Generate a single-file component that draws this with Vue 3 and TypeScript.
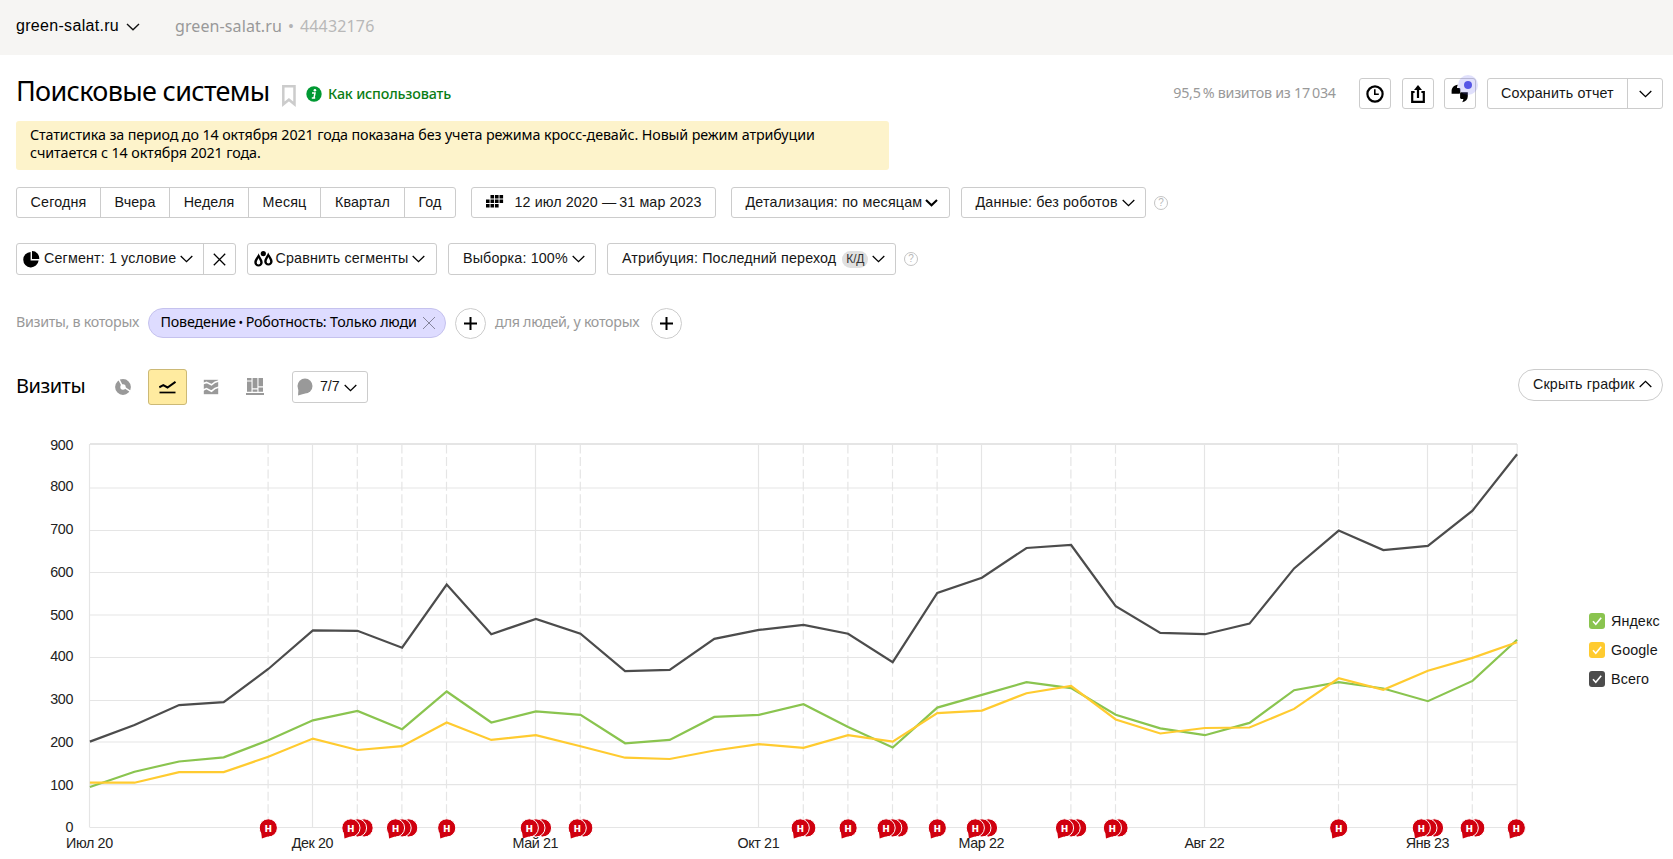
<script setup lang="ts">
interface Series {
  name: string
  color: string
  values: number[]
}

const X0 = 89.9
const X_STEP = 44.6
const Y0 = 827.3
const Y_UNIT = 0.42447

const periods = [
  { label: 'Сегодня', cls: 'p1' },
  { label: 'Вчера', cls: 'p2' },
  { label: 'Неделя', cls: 'p3' },
  { label: 'Месяц', cls: 'p4' },
  { label: 'Квартал', cls: 'p5' },
  { label: 'Год', cls: 'p6' },
]

const series: Series[] = [
  {
    name: 'Яндекс',
    color: '#8ac44f',
    values: [95, 131, 155, 165, 205, 252, 274, 231, 320, 247, 273, 265, 198, 206, 260, 265, 290, 236, 188, 282, 312, 342, 328, 265, 233, 217, 246, 323, 342, 327, 297, 345, 442],
  },
  {
    name: 'Google',
    color: '#ffcb30',
    values: [105, 105, 130, 130, 166, 209, 182, 191, 247, 206, 217, 191, 164, 161, 181, 196, 187, 217, 202, 269, 275, 316, 333, 254, 221, 234, 235, 279, 351, 324, 369, 399, 436],
  },
  {
    name: 'Всего',
    color: '#4c4c4c',
    values: [202, 241, 288, 295, 373, 464, 463, 423, 572, 455, 491, 456, 368, 371, 444, 465, 477, 456, 389, 552, 588, 658, 665, 521, 458, 455, 480, 610, 699, 653, 663, 746, 879],
  },
]

const px = (i: number): number => X0 + i * X_STEP
const points = (s: Series): string =>
  s.values.map((v, i) => `${px(i).toFixed(1)},${(Y0 - v * Y_UNIT).toFixed(1)}`).join(' ')

const yTicks = [
  { v: 900, line: 444, base: 450 },
  { v: 800, line: 488, base: 491 },
  { v: 700, line: 530.5, base: 534 },
  { v: 600, line: 572.5, base: 577 },
  { v: 500, line: 615, base: 620 },
  { v: 400, line: 657.5, base: 661 },
  { v: 300, line: 700.5, base: 703.5 },
  { v: 200, line: 742, base: 746.5 },
  { v: 100, line: 784.7, base: 789.5 },
  { v: 0, line: 827.5, base: 832 },
]

const xTicks = [
  { i: 0, label: 'Июл 20' },
  { i: 5, label: 'Дек 20' },
  { i: 10, label: 'Май 21' },
  { i: 15, label: 'Окт 21' },
  { i: 20, label: 'Мар 22' },
  { i: 25, label: 'Авг 22' },
  { i: 30, label: 'Янв 23' },
]

const dashed = [4, 6, 7, 8, 11, 16, 17, 18, 19, 22, 23, 28, 31]

// [month index, number of bubbles stacked behind the front one]
const notes = [
  [4, 0], [6, 2], [7, 2], [8, 0], [10, 2], [11, 1], [16, 1], [17, 0], [18, 2],
  [19, 0], [20, 2], [22, 2], [23, 1], [28, 0], [30, 2], [31, 1], [32, 0],
].map(([i, size]) => {
  const spread = size * 6.6
  const front = px(i) - spread / 2 - (i === 32 ? 0.8 : 0)
  const behind = Array.from({ length: size }, (_, k) => front + 6.6 * (size - k))
  return { i, front, behind }
})
</script>

<template>
  <div class="page">
    <header class="topbar">
      <span class="site">green-salat.ru</span>
      <svg class="site-chev" width="14" height="8" viewBox="0 0 14 8"><path d="M1 1l6 5.7L13 1" /></svg>
      <span class="counter">green-salat.ru</span>
      <span class="dot">•</span>
      <span class="counter-id">44432176</span>
    </header>

    <main>
      <div class="title-row">
        <h1>Поисковые системы</h1>
        <svg class="bookmark" width="14" height="22" viewBox="0 0 14 22"><path d="M1.3 1.3h11.2v18l-5.6-4.6-5.6 4.6z" /></svg>
        <svg class="info" width="16" height="16" viewBox="0 0 16 16">
          <circle cx="8" cy="8" r="7.7" fill="#009933" />
          <circle cx="8.9" cy="4.2" r="1.3" fill="#fff" />
          <path d="M6 7h3l-1 4.9h1.2M5.8 12.1h3.2" fill="none" stroke="#fff" stroke-width="1.5" />
        </svg>
        <a class="howto">Как использовать</a>
        <span class="share-info">95,5&#8201;% визитов из 17&#8201;034</span>
        <button class="btn sq">
          <svg width="18" height="18" viewBox="0 0 18 18"><circle cx="9" cy="9" r="7.6" /><path d="M8.8 4.2v5.1h4" class="thin" /></svg>
        </button>
        <button class="btn sq">
          <svg width="14" height="18" viewBox="0 0 14 18"><path d="M3.6 7H1.2v9.8h11.6V7h-2.4" /><path d="M7 13V3" /><path d="M7 0l4 5H3z" class="solid" /></svg>
        </button>
        <button class="btn sq quotes">
          <svg width="18" height="19" viewBox="0 0 18 19">
            <path class="solid" d="M6.800.8C3 1.400.600 3.800.600 6.800V9.800h7.800l.9-.9V4.800L8.400 3.900H6c0-1.200.4-2.200.8-3.100z" />
            <path class="solid" d="M10 8.200h6.800v4c0 3.200-2.200 5.200-5.600 6 .8-1.200 1.100-2.100 1.100-3.200H10l-.9-.9V9.100z" />
          </svg>
          <i class="badge-dot"></i>
        </button>
        <div class="btn split save"><span>Сохранить отчет</span><b><svg class="chev" width="13" height="8" viewBox="0 0 13 8"><path d="M.7 1l5.800 5.600L12.300 1" /></svg></b></div>
      </div>

      <p class="notice">Статистика за период до 14 октября 2021 года показана без учета режима кросс-девайс. Новый режим атрибуции<br />считается с 14 октября 2021 года.</p>

      <div class="row row1">
        <div class="group">
          <button v-for="p in periods" :key="p.label" :class="p.cls">{{ p.label }}</button>
        </div>
        <button class="btn date">
          <svg width="18" height="13" viewBox="0 0 18 13">
            <path class="solid" d="M4.500 0h3.600v3.600H4.500zM9 0h3.600v3.600H9zM13.500 0h3.600v3.600h-3.600zM0 4.500h3.600v3.600H0zM4.500 4.500h3.600v3.600H4.500zM9 4.500h3.600v3.600H9zM13.500 4.500h3.600v3.600h-3.600zM0 9h3.600v3.600H0zM4.500 9h3.600v3.600H4.500zM9 9h3.600v3.600H9z" />
          </svg>
          <span>12 июл 2020 —&#8201;31 мар 2023</span>
        </button>
        <button class="btn detail"><span>Детализация: по месяцам</span><svg class="chev bold" width="13" height="8" viewBox="0 0 13 8"><path d="M1 1l5.500 5.200L12 1" /></svg></button>
        <button class="btn data"><span>Данные: без роботов</span><svg class="chev" width="13" height="8" viewBox="0 0 13 8"><path d="M.7 1l5.800 5.600L12.300 1" /></svg></button>
        <i class="help">?</i>
      </div>

      <div class="row row2">
        <div class="btn split segment">
          <span>
            <svg width="17" height="17" viewBox="0 0 17 17"><path class="solid" d="M7.600 1A7.700 7.700 0 1 0 15.600 9.600H7.600z" /><path class="solid" d="M9 0a7.200 7.200 0 0 1 7.200 8H9z" /></svg>
            Сегмент: 1 условие
            <svg class="chev" width="13" height="8" viewBox="0 0 13 8"><path d="M.7 1l5.800 5.600L12.300 1" /></svg>
          </span>
          <b><svg class="chev" width="13" height="13" viewBox="0 0 13 13"><path d="M.8.800l11.400 11.400M12.200.800L.8 12.200" /></svg></b>
        </div>
        <button class="btn compare">
          <svg width="19" height="16" viewBox="0 0 19 16">
            <path class="solid" d="M4.600 2.200C4 5 .3 7.800.3 11.300a4.200 4.300 0 0 0 8.400 0C8.700 8.500 5.800 5.800 4.600 2.200zM14.200 1.400c-.9 3.200-4 5.800-4 8.900a4.200 4.300 0 0 0 8.400 0c0-3-3.300-5.700-4.400-8.900z" />
            <path fill="#fff" d="M4.500 7C3.900 9 2.700 9.800 2.700 11.600a1.800 2 0 0 0 3.600 0C6.300 9.800 5.100 9 4.500 7zM14.400 6c-.6 2-1.800 2.800-1.800 4.600a1.800 2 0 0 0 3.600 0C16.200 8.800 15 8 14.400 6z" />
            <circle class="solid" cx="9.300" cy="2.700" r="2.600" />
          </svg>
          <span>Сравнить сегменты</span><svg class="chev" width="13" height="8" viewBox="0 0 13 8"><path d="M.7 1l5.800 5.600L12.300 1" /></svg>
        </button>
        <button class="btn sample"><span>Выборка: 100%</span><svg class="chev" width="13" height="8" viewBox="0 0 13 8"><path d="M.7 1l5.800 5.600L12.300 1" /></svg></button>
        <button class="btn attr"><span>Атрибуция: Последний переход</span><em>К/Д</em><svg class="chev" width="13" height="8" viewBox="0 0 13 8"><path d="M.7 1l5.800 5.600L12.300 1" /></svg></button>
        <i class="help">?</i>
      </div>

      <div class="row row3">
        <span class="muted w1">Визиты, в которых</span>
        <div class="pill"><span>Поведение<small> • </small>Роботность: Только люди</span><svg width="14" height="14" viewBox="0 0 14 14"><path d="M1 1l12 12M13 1L1 13" /></svg></div>
        <button class="plus"><svg width="13" height="13" viewBox="0 0 13 13"><path d="M6.500 0v13M0 6.500h13" /></svg></button>
        <span class="muted w2">для людей, у которых</span>
        <button class="plus"><svg width="13" height="13" viewBox="0 0 13 13"><path d="M6.500 0v13M0 6.500h13" /></svg></button>
      </div>

      <div class="row row4">
        <h2>Визиты</h2>
        <svg class="mode donut" width="16" height="16" viewBox="0 0 16 16">
          <circle cx="8" cy="8" r="5.300" />
          <path d="M7.600 7.600L3.800.2M9 8.200l6.400 4.200" />
        </svg>
        <div class="active">
          <svg width="17" height="13" viewBox="0 0 17 13"><path d="M.3 6.300L4.300 4.200l4.200 2.300L16.500.9" stroke-width="2" /><path d="M.5 11.500h16" stroke-width="1.700" /></svg>
        </div>
        <svg class="mode area" width="16" height="16" viewBox="0 0 16 16">
          <rect width="16" height="16" fill="#999" />
          <path d="M-.5 4.800L3.500 3.400l5 2.400L12 3.200l4.500-1.400M-.5 11.300l4-1.700 5 2.600L12 9.400l4.500-1.600" />
        </svg>
        <svg class="mode bars" width="18" height="17" viewBox="0 0 18 17">
          <path fill="#999" d="M1 0h4.500v2.500H1zM1 3.600h4.500v10.200H1zM6.600 0h4.800v10.300H6.600zM6.600 11.400h4.800v2.400H6.600zM12.500 0H17v8.300h-4.500zM12.500 9.400H17v4.400h-4.500zM0 14.900h18V17H0z" />
        </svg>
        <button class="btn notes">
          <svg width="16" height="18" viewBox="0 0 16 18"><circle cx="8" cy="8" r="7.500" fill="#999" /><path d="M1.500 10.500L1 17.500l7-2z" fill="#999" /></svg>
          <span>7/7</span>
          <svg class="chev" width="13" height="8" viewBox="0 0 13 8"><path d="M.7 1l5.800 5.600L12.300 1" /></svg>
        </button>
        <button class="hide"><span>Скрыть график</span><svg class="chev" width="13" height="8" viewBox="0 0 13 8"><path d="M.7 7l5.800-5.600L12.300 7" /></svg></button>
      </div>
    </main>

    <section class="chart-area">
      <svg class="chart" width="1573" height="429" viewBox="0 430 1573 429">
        <g class="grid">
          <line v-for="t in yTicks" :key="t.v" :x1="90" :x2="1517" :y1="t.line" :y2="t.line" :class="{ top: t.v === 900 }" />
          <line v-for="t in xTicks" :key="t.i" :x1="px(t.i) - 0.4" :x2="px(t.i) - 0.4" y1="444" y2="827.500" />
          <line x1="1517.200" x2="1517.200" y1="444" y2="827.500" />
          <line v-for="i in dashed" :key="i" class="dash" :x1="px(i) - 0.2" :x2="px(i) - 0.2" y1="444.600" y2="827" />
        </g>
        <polyline v-for="s in series" :key="s.name" class="line" :points="points(s)" :stroke="s.color" />
        <g v-for="n in notes" :key="n.i" class="note">
          <circle v-for="b in n.behind" :key="b" :cx="b" cy="827.900" r="9.100" />
          <circle :cx="n.front" cy="827.900" r="9.100" />
          <path :d="`M${n.front - 7.200} 831.500l.8 7 7.200-2.600z`" />
          <text :x="n.front" y="831.700">н</text>
        </g>
        <g class="labels">
          <text v-for="t in yTicks" :key="t.v" x="73" :y="t.base" text-anchor="end">{{ t.v }}</text>
          <text v-for="t in xTicks" :key="t.i" :x="px(t.i) - 0.5" y="848.300" text-anchor="middle">{{ t.label }}</text>
        </g>
      </svg>
      <ul class="legend">
        <li v-for="s in series" :key="s.name">
          <svg width="16" height="16" viewBox="0 0 16 16"><rect width="16" height="16" rx="3" :fill="s.color" /><path d="M4 8.200l2.800 3L12.200 4.800" /></svg>
          {{ s.name }}
        </li>
      </ul>
    </section>
  </div>
</template>

<style>
body { background: #fff; overflow: hidden; }
</style>

<style scoped>
* { box-sizing: border-box; }
.page { width: 1673px; height: 859px; overflow: hidden; background: #fff; color: #000; font: 14.3px/18px 'Liberation Sans', Arial, sans-serif; letter-spacing: .14px; white-space: nowrap; }
button { font: inherit; letter-spacing: inherit; color: inherit; background: #fff; padding: 0; margin: 0; }
svg { flex: none; display: block; }
.topbar { height: 55px; background: #f6f5f3; display: flex; align-items: center; padding: 0 0 3px 16px; font-size: 16px; }
.site { width: 104px; letter-spacing: .31px; }
.site-chev { margin: 2px 0 0 6px; fill: none; stroke: #111; stroke-width: 1.4; }
.counter { margin-left: 35px; width: 107px; letter-spacing: .1px; color: #999; font-family: 'Noto Sans', sans-serif; }
.dot { width: 18px; text-align: center; color: #b3b3b3; font-size: 14px; }
.counter-id { letter-spacing: .16px; color: #b8b8b8; font-family: 'Noto Sans', sans-serif; }

main { padding: 0 10px 0 16px; }
.title-row { display: flex; align-items: center; height: 31px; margin-top: 23px; }
h1 { margin: 0; width: 265.500px; padding-bottom: 5px; font: 400 27px/34px 'Noto Sans', sans-serif; letter-spacing: -.68px; }
.bookmark { margin-top: 5px; fill: none; stroke: #ccc; stroke-width: 2.500; }
.info { margin: 1px 0 0 10.500px; }
.howto { margin: 1px 0 0 6px; font: 500 14.300px/18px 'Noto Sans', sans-serif; letter-spacing: -.18px; color: #0a7d14; }
.share-info { margin: -1px 22px 0 auto; width: 164px; color: #999; font-family: 'Noto Sans', sans-serif; letter-spacing: -.26px; }
.btn { display: flex; align-items: center; border: 1px solid #ccc; border-radius: 3px; background: #fff; height: 31px; }
.btn, .group, .hide, .legend { color: #161616; }
.solid { fill: #000; stroke: none; }
.sq { width: 32px; justify-content: center; margin-right: 10.600px; }
.sq svg { fill: none; stroke: #000; stroke-width: 2.200; }
.sq .thin { stroke-width: 1.600; }
.sq .solid { stroke: none; fill: #000; }
.quotes { position: relative; }
.quotes svg { margin: 0 0 0 -1px; }
.badge-dot { position: absolute; left: 13px; top: -4px; width: 20px; height: 20px; border-radius: 50%; background: #5757e6; background-clip: padding-box; border: 6px solid rgba(102, 98, 240, .2); }
.split { padding: 0; }
.split > span { display: flex; align-items: center; height: 100%; border-right: 1px solid #ccc; }
.split > b { display: flex; flex: 1; align-items: center; justify-content: center; }
.save { width: 176px; }
.save > span { width: 140px; padding: 0 0 2px 13px; }
.save > b { padding-top: 1px; }
.chev { fill: none; stroke: #000; stroke-width: 1.300; }
.chev.bold { stroke-width: 2.100; }

.notice { margin: 12px 0 0; width: 873px; height: 49px; padding: 5.300px 14px; border-radius: 3px; background: #fdf3cb; font: 14.300px/18px 'Noto Sans', sans-serif; letter-spacing: -.11px; }

.row { display: flex; align-items: center; }
.row > * { flex-shrink: 0; }
.row1 { margin-top: 17px; height: 31px; }
.group { display: flex; border: 1px solid #ccc; border-radius: 3px; height: 31px; width: 440px; margin-right: 15px; }
.group button { border: 0; background: none; border-left: 1px solid #ccc; height: 29px; padding-bottom: 2px; }
.group button:first-child { border-left: 0; }
.p1 { width: 83px; }
.p2 { width: 69px; }
.p3 { width: 79px; }
.p4 { width: 72px; }
.p5 { width: 84px; }
.p6 { flex: 1; }
.row1 .btn { padding-bottom: 2px; }
.date { width: 245px; padding-left: 14px; margin-right: 15px; }
.date span { margin-left: 10.500px; letter-spacing: .09px; }
.detail { width: 219px; padding-left: 13.500px; margin-right: 11px; }
.detail span { letter-spacing: .19px; }
.detail .chev { margin: 2px 0 0 3px; }
.data { width: 185px; padding-left: 13.500px; }
.data .chev { margin: 2px 0 0 4px; }
.help { margin: 0 0 0 8px; width: 14px; height: 14px; border: 1px solid #c4c4c4; border-radius: 50%; color: #b8b8b8; font: normal 10px/12px 'Liberation Sans', sans-serif; text-align: center; letter-spacing: 0; }

.row2 { margin-top: 25px; height: 32px; }
.row2 .btn { height: 32px; padding-bottom: 2px; }
.row2 .split { padding-bottom: 0; }
.row2 .chev { margin-top: 2px; }
.segment { width: 220px; margin-right: 11px; }
.segment > span { width: 187px; padding: 0 0 2px 6px; }
.segment > span svg:first-child { margin: 2px 4px 0 0; }
.segment > span .chev { margin-left: 4px; }
.segment > b .chev { margin: 0; }
.compare { width: 190px; padding-left: 6px; margin-right: 11px; }
.compare svg:first-child { margin: 2px 2.500px 0 0; }
.compare .chev { margin-left: 4px; }
.sample { width: 148px; padding-left: 14px; margin-right: 11px; }
.sample .chev { margin-left: 4.500px; }
.attr { width: 289px; padding-left: 14px; }
.attr em { margin: 3px 4px 0 6px; width: 26px; height: 17px; border-radius: 9px; background: #e0e0e0; color: #333; font: normal 12px/17px 'Liberation Sans', sans-serif; text-align: center; letter-spacing: -.2px; }

.row3 { margin-top: 32px; height: 32px; font-family: 'Noto Sans', sans-serif; letter-spacing: -.32px; }
.muted { color: #999; padding-bottom: 2px; }
.w1 { width: 132px; }
.w2 { width: 165px; padding-left: 9px; }
.pill { display: flex; align-items: center; width: 298px; height: 30px; padding-left: 11.500px; padding-bottom: 1px; border: 1px solid #c5c2ee; border-radius: 15px; background: #dedcff; letter-spacing: -.2px; margin-right: 9px; }
.pill span { width: 261.500px; white-space: pre; }
.pill small { font-size: 12px; }
.pill svg { fill: none; stroke: #85849b; stroke-width: 1; }
.plus { display: flex; align-items: center; justify-content: center; width: 31px; height: 31px; border: 1px solid #ccc; border-radius: 50%; }
.plus svg { fill: none; stroke: #000; stroke-width: 2; }

.row4 { margin-top: 30px; height: 36px; }
h2 { margin: 0; width: 99px; padding-bottom: 2px; font: 400 20px/26px 'Noto Sans', sans-serif; letter-spacing: -.5px; }
.donut circle { fill: none; stroke: #999; stroke-width: 5.200; }
.donut path { fill: none; stroke: #fff; stroke-width: 1.500; }
.active { display: flex; align-items: center; justify-content: center; width: 39px; height: 36px; margin: 0 16px 0 17px; border: 1px solid #ccb976; border-radius: 3px; background: #ffeba0; }
.active svg { fill: none; stroke: #000; }
.area { fill: none; stroke: #fff; stroke-width: 1.600; }
.bars { margin: -1px 28px 0 27px; }
.notes { width: 76px; height: 32px; padding-left: 4px; }
.notes svg:first-child { margin-top: -1px; }
.notes span { margin: -3px 4px 0 7px; letter-spacing: -.1px; }
.notes .chev { margin-top: 2px; }
.hide { display: flex; align-items: center; width: 145px; height: 32px; margin: -4px 0 0 auto; padding: 0 0 3px 14px; border: 1px solid #ccc; border-radius: 16px; }
.hide .chev { margin: 1px 0 0 4px; }

.chart-area { display: flex; margin-top: 25px; }
.grid line { stroke: #e5e5e5; stroke-width: 1.200; }
.grid .top { stroke-width: 2; }
.grid .dash { stroke-dasharray: 9 3.400; }
.line { fill: none; stroke-width: 2.200; stroke-linejoin: miter; }
.note circle { fill: #d0000f; stroke: #fff; stroke-width: 1; }
.note path { fill: #d0000f; }
.note text { fill: #fff; font: 700 11.500px 'Open Sans', sans-serif; text-anchor: middle; letter-spacing: 0; }
.labels text { fill: #222; font: 14.300px 'Liberation Sans', Arial, sans-serif; letter-spacing: -.38px; }
.legend { list-style: none; margin: 182px 0 0 16px; padding: 0; display: flex; flex-direction: column; gap: 11px; }
.legend li { display: flex; align-items: center; gap: 6px; height: 18px; letter-spacing: .1px; }
.legend path { fill: none; stroke: #fff; stroke-width: 1.600; }
</style>
